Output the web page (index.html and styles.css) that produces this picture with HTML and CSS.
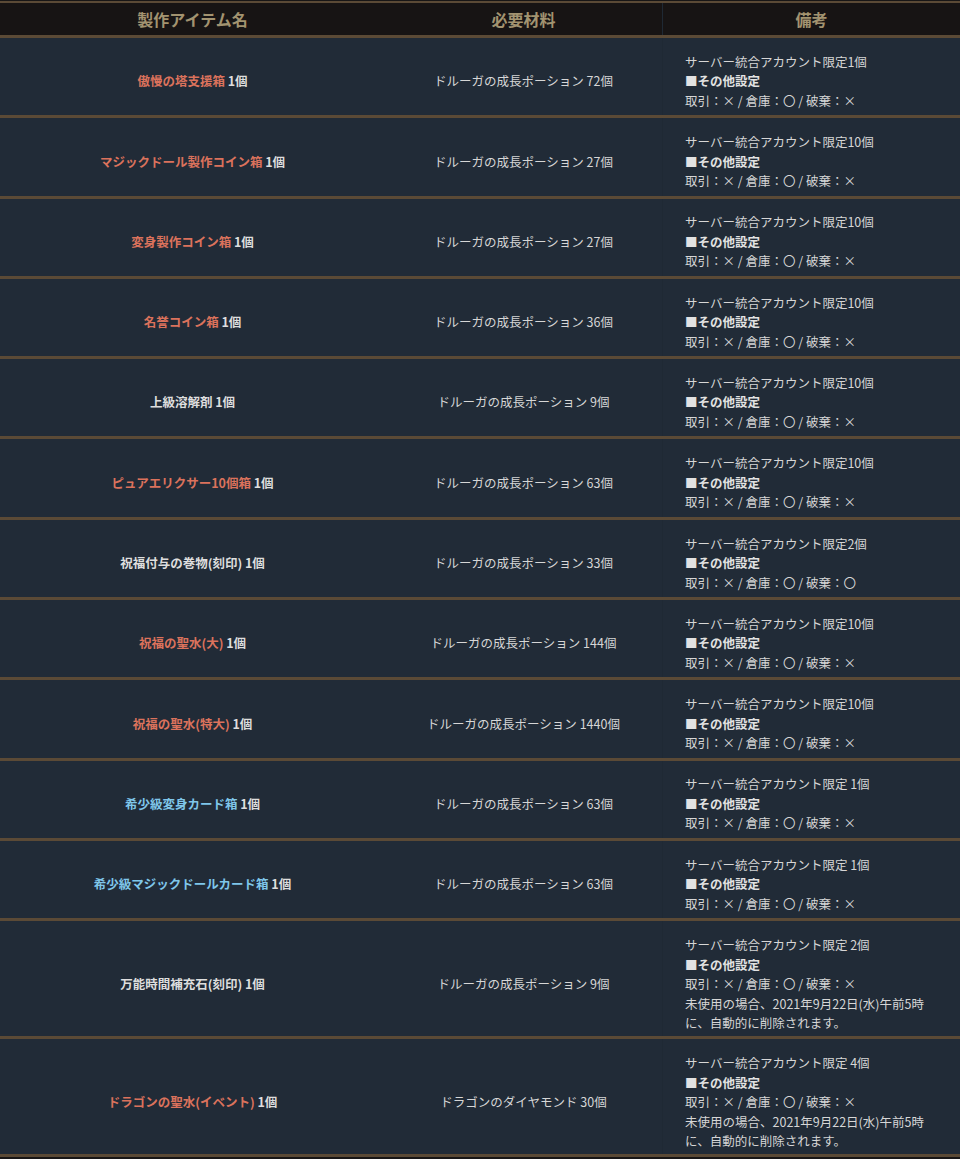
FILE: index.html
```html
<!DOCTYPE html>
<html lang="ja">
<head>
<meta charset="utf-8">
<title>製作アイテム</title>
<link rel="stylesheet" href="styles.css">
</head>
<body>
<div class="table">
  <div class="row head">
    <div class="cell c1">製作アイテム名</div>
    <div class="cell c2">必要材料</div>
    <div class="cell c3">備考</div>
  </div>

  <div class="row">
    <div class="cell c1"><span class="txt"><span class="red">傲慢の塔支援箱</span> 1個</span></div>
    <div class="cell c2"><span class="txt">ドルーガの成長ポーション 72個</span></div>
    <div class="cell c3">サーバー統合アカウント限定1個<br><b>■その他設定</b><br>取引：× / 倉庫：〇 / 破棄：×</div>
  </div>
  <div class="row">
    <div class="cell c1"><span class="txt"><span class="red">マジックドール製作コイン箱</span> 1個</span></div>
    <div class="cell c2"><span class="txt">ドルーガの成長ポーション 27個</span></div>
    <div class="cell c3">サーバー統合アカウント限定10個<br><b>■その他設定</b><br>取引：× / 倉庫：〇 / 破棄：×</div>
  </div>
  <div class="row">
    <div class="cell c1"><span class="txt"><span class="red">変身製作コイン箱</span> 1個</span></div>
    <div class="cell c2"><span class="txt">ドルーガの成長ポーション 27個</span></div>
    <div class="cell c3">サーバー統合アカウント限定10個<br><b>■その他設定</b><br>取引：× / 倉庫：〇 / 破棄：×</div>
  </div>
  <div class="row">
    <div class="cell c1"><span class="txt"><span class="red">名誉コイン箱</span> 1個</span></div>
    <div class="cell c2"><span class="txt">ドルーガの成長ポーション 36個</span></div>
    <div class="cell c3">サーバー統合アカウント限定10個<br><b>■その他設定</b><br>取引：× / 倉庫：〇 / 破棄：×</div>
  </div>
  <div class="row">
    <div class="cell c1"><span class="txt">上級溶解剤 1個</span></div>
    <div class="cell c2"><span class="txt">ドルーガの成長ポーション 9個</span></div>
    <div class="cell c3">サーバー統合アカウント限定10個<br><b>■その他設定</b><br>取引：× / 倉庫：〇 / 破棄：×</div>
  </div>
  <div class="row">
    <div class="cell c1"><span class="txt"><span class="red">ピュアエリクサー10個箱</span> 1個</span></div>
    <div class="cell c2"><span class="txt">ドルーガの成長ポーション 63個</span></div>
    <div class="cell c3">サーバー統合アカウント限定10個<br><b>■その他設定</b><br>取引：× / 倉庫：〇 / 破棄：×</div>
  </div>
  <div class="row">
    <div class="cell c1"><span class="txt">祝福付与の巻物(刻印) 1個</span></div>
    <div class="cell c2"><span class="txt">ドルーガの成長ポーション 33個</span></div>
    <div class="cell c3">サーバー統合アカウント限定2個<br><b>■その他設定</b><br>取引：× / 倉庫：〇 / 破棄：〇</div>
  </div>
  <div class="row">
    <div class="cell c1"><span class="txt"><span class="red">祝福の聖水(大)</span> 1個</span></div>
    <div class="cell c2"><span class="txt">ドルーガの成長ポーション 144個</span></div>
    <div class="cell c3">サーバー統合アカウント限定10個<br><b>■その他設定</b><br>取引：× / 倉庫：〇 / 破棄：×</div>
  </div>
  <div class="row">
    <div class="cell c1"><span class="txt"><span class="red">祝福の聖水(特大)</span> 1個</span></div>
    <div class="cell c2"><span class="txt">ドルーガの成長ポーション 1440個</span></div>
    <div class="cell c3">サーバー統合アカウント限定10個<br><b>■その他設定</b><br>取引：× / 倉庫：〇 / 破棄：×</div>
  </div>
  <div class="row">
    <div class="cell c1"><span class="txt"><span class="blue">希少級変身カード箱</span> 1個</span></div>
    <div class="cell c2"><span class="txt">ドルーガの成長ポーション 63個</span></div>
    <div class="cell c3">サーバー統合アカウント限定 1個<br><b>■その他設定</b><br>取引：× / 倉庫：〇 / 破棄：×</div>
  </div>
  <div class="row">
    <div class="cell c1"><span class="txt"><span class="blue">希少級マジックドールカード箱</span> 1個</span></div>
    <div class="cell c2"><span class="txt">ドルーガの成長ポーション 63個</span></div>
    <div class="cell c3">サーバー統合アカウント限定 1個<br><b>■その他設定</b><br>取引：× / 倉庫：〇 / 破棄：×</div>
  </div>
  <div class="row long">
    <div class="cell c1"><span class="txt">万能時間補充石(刻印) 1個</span></div>
    <div class="cell c2"><span class="txt">ドルーガの成長ポーション 9個</span></div>
    <div class="cell c3">サーバー統合アカウント限定 2個<br><b>■その他設定</b><br>取引：× / 倉庫：〇 / 破棄：×<br>未使用の場合、2021年9月22日(水)午前5時<br>に、自動的に削除されます。</div>
  </div>
  <div class="row long">
    <div class="cell c1"><span class="txt"><span class="red">ドラゴンの聖水(イベント)</span> 1個</span></div>
    <div class="cell c2"><span class="txt">ドラゴンのダイヤモンド 30個</span></div>
    <div class="cell c3">サーバー統合アカウント限定 4個<br><b>■その他設定</b><br>取引：× / 倉庫：〇 / 破棄：×<br>未使用の場合、2021年9月22日(水)午前5時<br>に、自動的に削除されます。</div>
  </div>
</div>
</body>
</html>
```

FILE: styles.css
```css
html, body {
  margin: 0;
  padding: 0;
  background: #181616;
}
body {
  padding-top: 1px;
  font-family: "Noto Sans CJK JP", "Noto Sans", sans-serif;
  color: #d6d6d6;
}
.table {
  border-top: 2px solid #5b4a36;
}
.row {
  display: grid;
  grid-template-columns: 385px 277px 1fr;
  background: #212b37;
  border-bottom: 3px solid #5b4a36;
}
.cell {
  font-size: 12.5px;
  line-height: 19.5px;
  padding: 13.8px 10px 5px;
}
.row.long .cell {
  padding-bottom: 3.7px;
}
.c1, .c2 {
  text-align: center;
  display: flex;
  align-items: center;
  justify-content: center;
}
.c1 {
  font-weight: bold;
  color: #dedede;
}
.c1 .red { color: #db725c; }
.c1 .blue { color: #7fc6ea; }
.c2 { color: #d6d6d6; }
.c3 {
  padding-left: 22px;
  padding-right: 4px;
  border-left: 1px solid #1f2934;
}
.c3 b { font-weight: bold; color: #e2e2e2; }
.head {
  background: #171414;
}
.head .cell {
  padding: 0;
  height: 32px;
  line-height: 32px;
  font-size: 16px;
  font-weight: bold;
  color: #a29370;
  text-align: center;
  display: block;
}
.head .c3 {
  border-left: 1px solid #1f2934;
}
```
